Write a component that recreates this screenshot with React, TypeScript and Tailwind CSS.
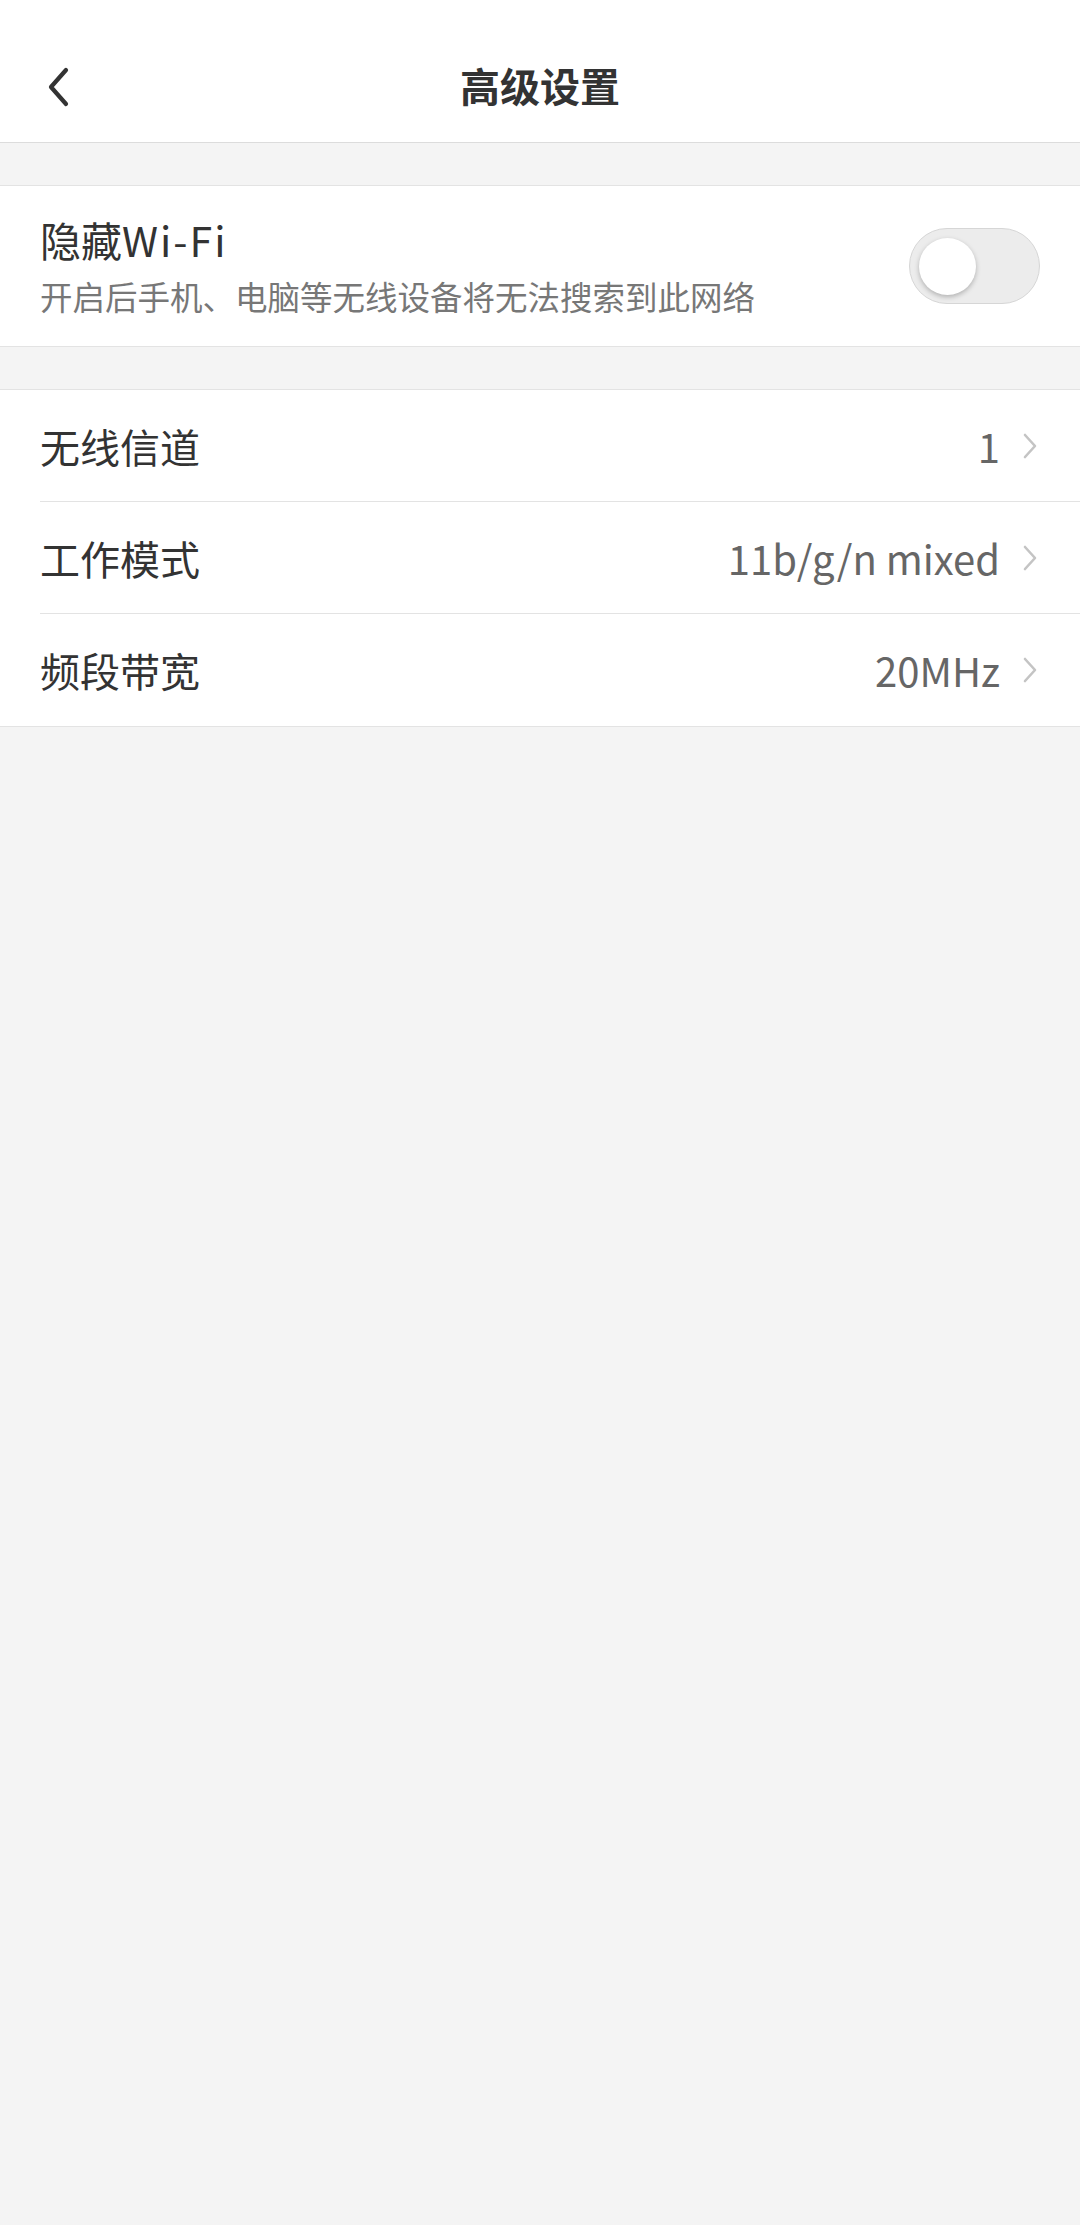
import { useState } from "react";

const font = { fontFamily: '"Noto Sans CJK SC", "Noto Sans", sans-serif' };

function Chevron() {
  return (
    <svg width="16" height="28" viewBox="0 0 16 28" className="ml-[22px] shrink-0">
      <path d="M3 3 L13 14 L3 25" fill="none" stroke="#c4c4c4" strokeWidth="2.6" strokeLinecap="round" strokeLinejoin="round" />
    </svg>
  );
}

function Row({ label, value, last }: { label: string; value: string; last?: boolean }) {
  return (
    <div className="pl-[40px]">
      <div className={`flex h-[112px] items-center pr-[42px] ${last ? "" : "border-b border-[#e3e3e3]"}`}>
        <span className="text-[40px] text-[#333]">{label}</span>
        <span className="ml-auto text-[40px] text-[#666]">{value}</span>
        <Chevron />
      </div>
    </div>
  );
}

export default function App() {
  const [hidden, setHidden] = useState(false);

  return (
    <div className="min-h-[2225px] bg-[#f4f4f4]" style={font}>
      <header className="h-[143px] border-b border-[#dcdcdc] bg-white pt-[32px]">
        <div className="relative flex h-[106px] items-center justify-center">
          <button className="absolute left-[44px] top-[35px]">
            <svg width="28" height="40" viewBox="0 0 28 40">
              <path d="M22 3 L7 20 L22 37" fill="none" stroke="#333" strokeWidth="4.2" strokeLinecap="round" strokeLinejoin="round" />
            </svg>
          </button>
          <h1 className="text-[40px] font-bold text-[#333]">高级设置</h1>
        </div>
      </header>

      <section className="mt-[42px] border-y border-[#e3e3e3] bg-white">
        <div className="flex h-[160px] items-center pl-[40px] pr-[40px]">
          <div className="flex flex-col">
            <span className="text-[41px] leading-[48px] text-[#333]">
              隐藏<span className="tracking-[2px]">Wi-Fi</span>
            </span>
            <span className="mt-[12px] text-[32.5px] leading-[42px] text-[#777]">开启后手机、电脑等无线设备将无法搜索到此网络</span>
          </div>
          <button
            onClick={() => setHidden(!hidden)}
            className={`ml-auto flex h-[76px] w-[131px] shrink-0 items-center rounded-full border border-[#d6d6d6] px-[9px] ${hidden ? "bg-[#3b82f6] justify-end" : "bg-[#ececec]"}`}
          >
            <span className="h-[57px] w-[57px] rounded-full bg-white shadow-[0_2px_5px_rgba(0,0,0,0.25)]" />
          </button>
        </div>
      </section>

      <section className="mt-[42px] border-y border-[#e3e3e3] bg-white">
        <Row label="无线信道" value="1" />
        <Row label="工作模式" value="11b/g/n mixed" />
        <Row label="频段带宽" value="20MHz" last />
      </section>
    </div>
  );
}
